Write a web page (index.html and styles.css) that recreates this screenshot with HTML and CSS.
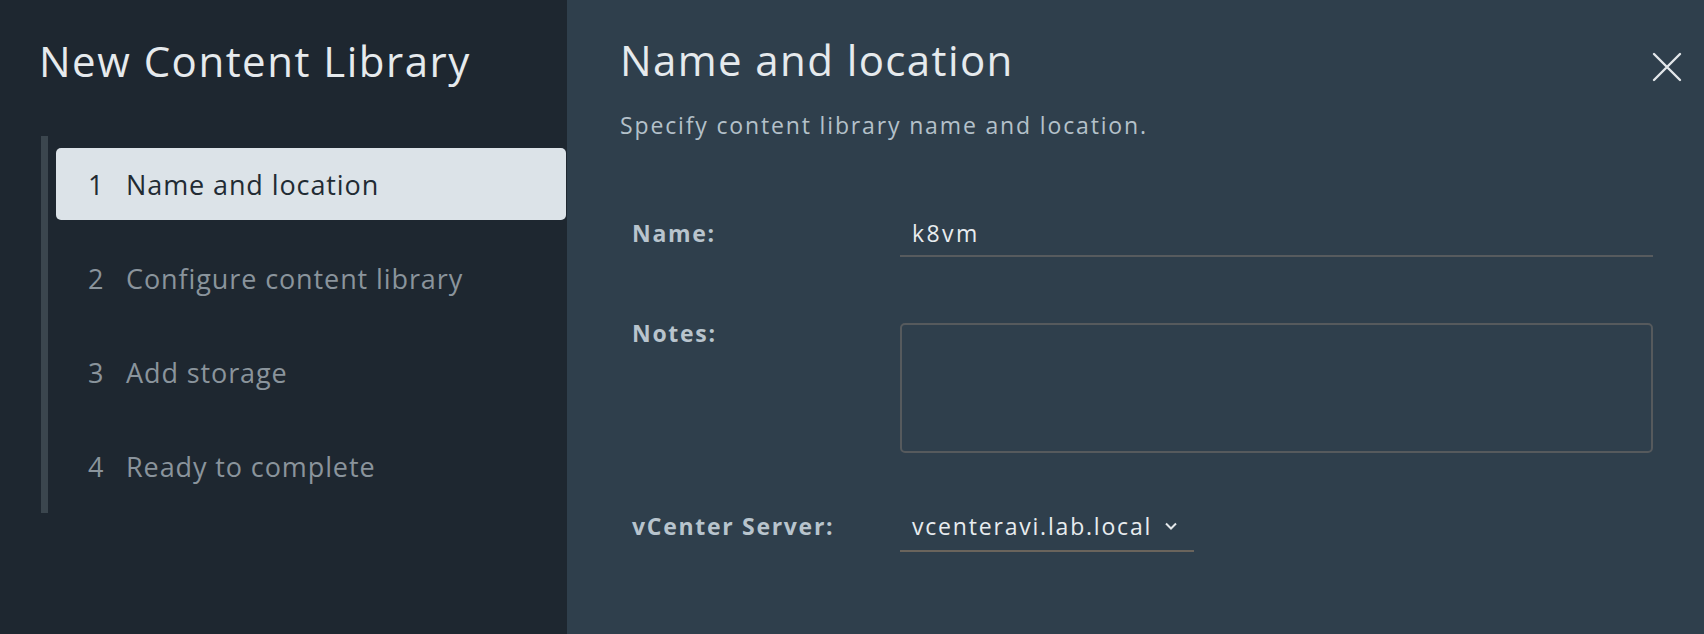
FILE: index.html
```html
<!DOCTYPE html>
<html lang="en">
<head>
<meta charset="utf-8">
<title>New Content Library</title>
<link rel="stylesheet" href="styles.css">
</head>
<body>
<div class="wizard">
  <aside class="sidebar">
    <h1 class="sidebar-title">New Content Library</h1>
    <ol class="steps">
      <li class="step active"><span class="step-num">1</span><span class="step-label">Name and location</span></li>
      <li class="step"><span class="step-num">2</span><span class="step-label">Configure content library</span></li>
      <li class="step"><span class="step-num">3</span><span class="step-label">Add storage</span></li>
      <li class="step"><span class="step-num">4</span><span class="step-label">Ready to complete</span></li>
    </ol>
  </aside>
  <main class="content">
    <header class="content-header">
      <h2 class="content-title">Name and location</h2>
      <button class="close" aria-label="Close">
        <svg width="30" height="30" viewBox="0 0 30 30"><path d="M2 2 L28 28 M28 2 L2 28" stroke="#e3e7ea" stroke-width="2.4" fill="none" stroke-linecap="round"/></svg>
      </button>
    </header>
    <p class="subtitle">Specify content library name and location.</p>
    <div class="form">
      <div class="row">
        <div class="label">Name:</div>
        <div class="field text-input">k8vm</div>
      </div>
      <div class="row row-notes">
        <div class="label">Notes:</div>
        <div class="field textarea"></div>
      </div>
      <div class="row row-select">
        <div class="label">vCenter Server:</div>
        <div class="select">
          <span class="select-value">vcenteravi.lab.local</span>
          <svg class="chev" width="14" height="10" viewBox="0 0 14 10"><path d="M2 2.5 L7 7.5 L12 2.5" stroke="#e3e7ea" stroke-width="2" fill="none"/></svg>
        </div>
      </div>
    </div>
  </main>
</div>
</body>
</html>
```

FILE: styles.css
```css
* { box-sizing: border-box; }
html, body { margin: 0; padding: 0; height: 100%; }
body {
  font-family: "Open Sans", Lato, sans-serif;
  background: #2f3f4c;
  overflow: hidden;
}
.wizard {
  display: flex;
  width: 1704px;
  height: 634px;
}
.sidebar {
  width: 567px;
  flex: 0 0 567px;
  background: #1e2730;
  padding: 36px 0 0 39px;
}
.sidebar-title {
  margin: 0;
  font-size: 42px;
  line-height: 50px;
  font-weight: 400;
  color: #e6eaed;
  letter-spacing: 1.5px;
}
.steps {
  list-style: none;
  margin: 50px 0 0 2px;
  padding: 12px 0 11px 8px;
  border-left: 7px solid #3b464e;
  display: flex;
  flex-direction: column;
  gap: 22px;
}
.step {
  height: 72px;
  display: flex;
  align-items: center;
  padding-left: 32px;
  font-size: 27px;
  color: #8a949c;
  margin-right: 1px;
  letter-spacing: 0.9px;
}
.step.active {
  background: #dce3e8;
  color: #222b33;
  border-radius: 5px;
}
.step-num { width: 38px; }
.content {
  flex: 1;
  padding: 35px 22px 0 53px;
}
.content-header {
  display: flex;
  justify-content: space-between;
  align-items: flex-start;
}
.content-title {
  margin: 0;
  font-size: 42px;
  line-height: 50px;
  font-weight: 400;
  color: #e6eaed;
  letter-spacing: 1.4px;
}
.close {
  background: none;
  border: 0;
  padding: 0;
  margin-top: 17px;
  width: 30px;
  height: 30px;
}
.close svg { display: block; }
.subtitle {
  margin: 26px 0 0;
  font-size: 23px;
  line-height: 28px;
  color: #b4c1ca;
  letter-spacing: 1.85px;
}
.form {
  margin: 73px 29px 0 12px;
  display: flex;
  flex-direction: column;
  gap: 55px;
}
.row {
  display: grid;
  grid-template-columns: 268px 1fr;
  align-items: start;
}
.row-select { margin-top: -3px; }
.label {
  font-size: 23px;
  line-height: 42px;
  font-weight: 700;
  color: #b8c4cd;
  letter-spacing: 1.7px;
}
.text-input {
  font-size: 23px;
  line-height: 42px;
  color: #e8ecef;
  padding: 0 0 1px 12px;
  border-bottom: 2px solid #575b5e;
  letter-spacing: 2.4px;
}
.textarea {
  margin-top: 11px;
  height: 130px;
  border: 2px solid #565a5d;
  border-radius: 5px;
}
.select {
  justify-self: start;
  display: flex;
  align-items: center;
  gap: 12px;
  font-size: 23px;
  line-height: 36px;
  color: #e8ecef;
  padding: 3px 16px 6px 12px;
  border-bottom: 2px solid #6a645c;
  letter-spacing: 1.8px;
}
```
